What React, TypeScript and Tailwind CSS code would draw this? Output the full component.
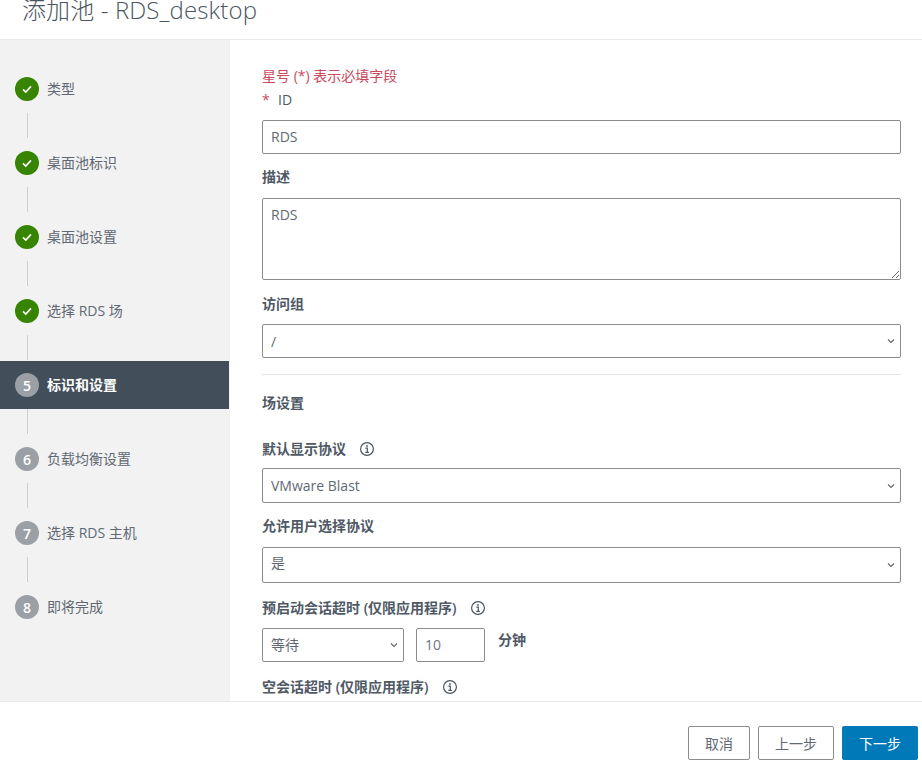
const FONT = "font-['Open_Sans','Noto_Sans_CJK_SC',sans-serif]";

const steps = [
  { n: 1, label: '类型', done: true },
  { n: 2, label: '桌面池标识', done: true },
  { n: 3, label: '桌面池设置', done: true },
  { n: 4, label: '选择 RDS 场', done: true },
  { n: 5, label: '标识和设置', active: true },
  { n: 6, label: '负载均衡设置' },
  { n: 7, label: '选择 RDS 主机' },
  { n: 8, label: '即将完成' },
];

const Chevron = () => (
  <svg
    className="absolute right-[6px] top-1/2 -translate-y-1/2 pointer-events-none"
    width="8"
    height="6"
    viewBox="0 0 8 6"
    fill="none"
  >
    <path d="M1 1.5 L4 4.5 L7 1.5" stroke="#666" strokeWidth="1.1" />
  </svg>
);

const Info = () => (
  <svg width="16" height="16" viewBox="0 0 16 16" fill="none" className="shrink-0">
    <circle cx="8" cy="8" r="6.4" stroke="#4a5562" strokeWidth="1.2" />
    <circle cx="8" cy="4.9" r="0.9" fill="#4a5562" />
    <path d="M6.4 7.1 H8.3 V11.2 M6.3 11.3 H9.9" stroke="#4a5562" strokeWidth="1.2" />
  </svg>
);

const Select = ({ value, h, pb = '', className = '' }: { value: string; h: string; pb?: string; className?: string }) => (
  <div className={`relative ${h} ${className}`}>
    <select
      defaultValue={value}
      className={`appearance-none w-full h-full border border-[#8c8c8c] rounded-[2px] bg-white pl-2 ${pb} text-[14px] text-[#5f6873] outline-none`}
    >
      <option>{value}</option>
    </select>
    <Chevron />
  </div>
);

const Label = ({ children, className = '' }: { children: React.ReactNode; className?: string }) => (
  <div className={`text-[14px] leading-[20px] font-semibold text-[#4f5965] ${className}`}>{children}</div>
);

const Step = ({ s, last }: { s: (typeof steps)[number]; last: boolean }) => (
  <>
    <div
      className={`h-[48px] flex items-center pl-[15px] gap-2 ${s.active ? 'bg-[#434e5b] text-white font-semibold' : 'text-[#5f6873]'}`}
    >
      {s.done ? (
        <div className="w-6 h-6 rounded-full bg-[#368400] flex items-center justify-center">
          <svg width="12" height="12" viewBox="0 0 12 12" fill="none">
            <path d="M2 6.4 L4.8 9 L10 3.4" stroke="white" strokeWidth="1.6" />
          </svg>
        </div>
      ) : (
        <div className="w-6 h-6 rounded-full bg-[#9aa0a6] flex items-center justify-center text-[14px] font-semibold text-white">
          {s.n}
        </div>
      )}
      <span className="text-[14px] leading-[20px] mb-[1px]">{s.label}</span>
    </div>
    {!last && (
      <div className="h-[26px] pl-[27px]">
        <div className="w-px h-[25px] bg-[#cfcfcf]" />
      </div>
    )}
  </>
);

export default function App() {
  return (
    <div className={`w-[922px] h-[769px] flex flex-col bg-white overflow-hidden ${FONT}`}>
      <div className="h-[40px] shrink-0 border-b border-[#e8e8e8] pl-[22px] flex items-end overflow-hidden">
        <h1 className="text-[24px] leading-[32px] mb-[13px] font-light tracking-[0.12px] text-[#4a5562] whitespace-nowrap">
          添加池 - RDS_desktop
        </h1>
      </div>

      <div className="flex-1 flex min-h-0">
        <div className="w-[230px] shrink-0 bg-[#f2f2f2] pt-[25px] pr-px">
          {steps.map((s, i) => (
            <Step key={s.n} s={s} last={i === steps.length - 1} />
          ))}
        </div>

        <div className="flex-1 min-w-0 overflow-hidden pl-[32px] pr-[21px] pt-[26px]">
          <div className="text-[14px] leading-[20px] text-[#cb4a5e]">星号 (*) 表示必填字段</div>
          <div className="mt-[4px] flex items-center text-[14px] leading-[20px] text-[#4f5965]">
            <span className="text-[#cb4a5e] w-[16px]">*</span>
            ID
          </div>
          <input
            defaultValue="RDS"
            className="mt-[10px] block w-full h-[34px] border border-[#8c8c8c] rounded-[2px] px-2 pb-[2px] text-[14px] text-[#5f6873] outline-none"
          />
          <Label className="mt-[13px]">描述</Label>
          <textarea
            defaultValue="RDS"
            className="mt-[11px] block w-full h-[82px] border border-[#8c8c8c] rounded-[2px] px-2 py-[6px] text-[14px] leading-[20px] text-[#5f6873] outline-none"
          />
          <Label className="mt-[14px]">访问组</Label>
          <Select value="/" h="h-[34px]" className="mt-[10px]" />
          <div className="mt-[16px] h-px bg-[#e4e4e4]" />
          <Label className="mt-[18px]">场设置</Label>
          <Label className="mt-[26px] flex items-center gap-[13px]">
            默认显示协议 <Info />
          </Label>
          <Select value="VMware Blast" h="h-[35px]" className="mt-[9px]" />
          <Label className="mt-[13px]">允许用户选择协议</Label>
          <Select value="是" h="h-[36px]" pb="pb-[5px]" className="mt-[11px]" />
          <Label className="mt-[15px] flex items-center gap-[13px]">
            预启动会话超时 (仅限应用程序) <Info />
          </Label>
          <div className="mt-[10px] flex items-start">
            <Select value="等待" h="h-[34px]" pb="pb-[2px]" className="w-[142px]" />
            <input
              defaultValue="10"
              className="ml-[12px] w-[69px] h-[34px] border border-[#8c8c8c] rounded-[2px] px-2 pb-[2px] text-[14px] text-[#6f7782] outline-none"
            />
            <Label className="ml-[13px] mt-[2px]">分钟</Label>
          </div>
          <Label className="mt-[15px] flex items-center gap-[13px]">
            空会话超时 (仅限应用程序) <Info />
          </Label>
        </div>
      </div>

      <div className="h-[68px] shrink-0 border-t border-[#e8e8e8] flex items-start justify-end gap-[8px] pt-[24px] pr-[4px]">
        <button className="w-[62px] h-[34px] border border-[#8c8c8c] rounded-[2px] bg-white text-[14px] text-[#5f6873]">
          取消
        </button>
        <button className="w-[76px] h-[34px] border border-[#8c8c8c] rounded-[2px] bg-white text-[14px] text-[#5f6873]">
          上一步
        </button>
        <button className="w-[76px] h-[34px] rounded-[2px] bg-[#0079b8] text-[14px] text-white">下一步</button>
      </div>
    </div>
  );
}
